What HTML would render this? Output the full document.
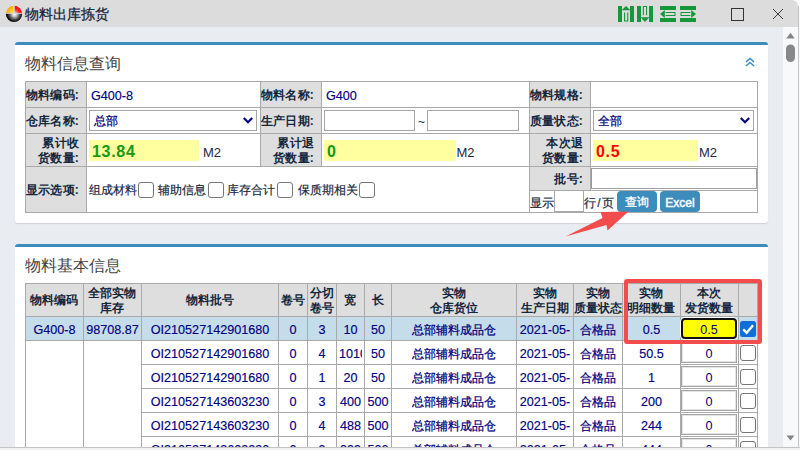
<!DOCTYPE html><html><head><meta charset="utf-8"><style>
html,body{margin:0;padding:0;width:800px;height:450px;overflow:hidden;background:#e9edf2;font-family:"Liberation Sans", sans-serif;}
div{box-sizing:border-box;}
</style></head><body>
<div style="position:absolute;left:0px;top:0px;width:800px;height:27px;background:#fafafa"></div>
<div style="position:absolute;left:0px;top:0px;width:798px;height:27px;background:#dcdcdc;border-top-right-radius:6px"></div>
<svg style="position:absolute;left:5px;top:5px" width="18" height="18" viewBox="0 0 18 18">
<defs>
<clipPath id="cc"><circle cx="9" cy="8.9" r="8.1"/></clipPath>
<radialGradient id="gb" cx="9.5" cy="9.3" r="8.5" gradientUnits="userSpaceOnUse"><stop offset="0" stop-color="#fff"/><stop offset="0.25" stop-color="#c8c8c8"/><stop offset="0.6" stop-color="#555"/><stop offset="0.9" stop-color="#000"/></radialGradient>
<radialGradient id="go" cx="8" cy="8" r="8" gradientUnits="userSpaceOnUse"><stop offset="0" stop-color="#ffe24a"/><stop offset="1" stop-color="#ff9a00"/></radialGradient>
<radialGradient id="gr" cx="10" cy="8" r="8" gradientUnits="userSpaceOnUse"><stop offset="0" stop-color="#ffc0c0"/><stop offset="0.5" stop-color="#ff2020"/><stop offset="1" stop-color="#ff0000"/></radialGradient>
</defs>
<g clip-path="url(#cc)">
<rect x="0" y="0" width="8" height="7.9" fill="url(#go)"/>
<rect x="9.7" y="0" width="9" height="7.9" fill="url(#gr)"/>
<rect x="0" y="8.8" width="18" height="10" fill="url(#gb)"/>
</g>
</svg>
<div style="position:absolute;left:25px;top:6px;white-space:nowrap;font-size:14px;line-height:17px;color:#12243a;font-weight:normal;line-height:16px;-webkit-text-stroke:0.25px #12243a">物料出库拣货</div>
<svg style="position:absolute;left:617px;top:5px" width="82" height="18" viewBox="617 5 82 18">
<g fill="#16973a">
<rect x="618" y="6" width="4" height="16"/><rect x="630" y="6" width="4" height="16"/>
<polygon points="626,6 621.6,10.3 630.4,10.3"/>
<path d="M624 12.6 h1.1 v7.8 h2.1 v-7.8 h1.1 v8.8 h-4.3 z"/>
<rect x="637" y="6" width="4" height="16"/><rect x="649" y="6" width="4" height="16"/>
<polygon points="645,22 640.6,17.2 649.4,17.2"/>
<path d="M642.8 15.2 v-9.2 h4.3 v9.2 h-1.1 v-8.2 h-2.1 v8.2 z"/>
<rect x="660" y="6" width="16" height="4"/><rect x="660" y="18" width="16" height="4"/>
<polygon points="660,14 664.8,10 664.8,18"/>
<path d="M665.5 12 h10 v4 h-10 v-1 h9 v-2 h-9 z"/>
<rect x="680" y="6" width="16" height="4"/><rect x="680" y="18" width="16" height="4"/>
<polygon points="696,14 691.2,10 691.2,18"/>
<path d="M690.5 12 h-10 v4 h10 v-1 h-9 v-2 h9 z"/>
</g></svg>
<div style="position:absolute;left:731px;top:8px;width:13px;height:13px;border:1.2px solid #333"></div>
<svg style="position:absolute;left:772px;top:8px" width="12" height="12" viewBox="0 0 12 12"><path d="M1 1 L11 11 M11 1 L1 11" stroke="#3a3a3a" stroke-width="1"/></svg>
<div style="position:absolute;left:798px;top:27px;width:2px;height:420px;background:#fafafa"></div>
<div style="position:absolute;left:798px;top:6px;width:1px;height:441px;background:#c4c4c4"></div>
<div style="position:absolute;left:783px;top:27px;width:15px;height:420px;background:#f8f9fa"></div>
<svg style="position:absolute;left:783px;top:27px" width="15" height="420" viewBox="0 0 15 420">
<polygon points="7.5,5.8 3.3,11.6 11.7,11.6" fill="#858585"/>
<rect x="3" y="17.5" width="9" height="17.5" rx="4.5" fill="#888"/>
<polygon points="7.5,413.6 3.5,408.4 11.5,408.4" fill="#858585"/>
</svg>
<div style="position:absolute;left:15px;top:42px;width:753px;height:181px;background:#fff;border-top:3px solid #3c8dbc;border-radius:3px;box-shadow:0 1px 1px rgba(0,0,0,0.12)"></div>
<div style="position:absolute;left:25px;top:54px;white-space:nowrap;font-size:16px;line-height:19px;color:#444;font-weight:normal;line-height:19px">物料信息查询</div>
<svg style="position:absolute;left:745px;top:57px" width="10" height="10" viewBox="0 0 10 10"><path d="M1 5 L5 1.5 L9 5 M1 9 L5 5.5 L9 9" stroke="#3c8dbc" stroke-width="1.6" fill="none"/></svg>
<div style="position:absolute;left:25px;top:81px;width:61px;height:26px;background:#dedede"></div>
<div style="position:absolute;left:25px;top:107px;width:61px;height:26px;background:#dedede"></div>
<div style="position:absolute;left:25px;top:133px;width:61px;height:33px;background:#dedede"></div>
<div style="position:absolute;left:260px;top:81px;width:61px;height:26px;background:#dedede"></div>
<div style="position:absolute;left:260px;top:107px;width:61px;height:26px;background:#dedede"></div>
<div style="position:absolute;left:260px;top:133px;width:61px;height:33px;background:#dedede"></div>
<div style="position:absolute;left:529px;top:81px;width:61px;height:26px;background:#dedede"></div>
<div style="position:absolute;left:529px;top:107px;width:61px;height:26px;background:#dedede"></div>
<div style="position:absolute;left:529px;top:133px;width:61px;height:33px;background:#dedede"></div>
<div style="position:absolute;left:25px;top:166px;width:61px;height:46px;background:#dedede"></div>
<div style="position:absolute;left:529px;top:166px;width:61px;height:24px;background:#dedede"></div>
<div style="position:absolute;left:25px;top:81px;width:733px;height:1px;background:#a9a9a9"></div>
<div style="position:absolute;left:25px;top:107px;width:733px;height:1px;background:#a9a9a9"></div>
<div style="position:absolute;left:25px;top:133px;width:733px;height:1px;background:#a9a9a9"></div>
<div style="position:absolute;left:25px;top:166px;width:733px;height:1px;background:#a9a9a9"></div>
<div style="position:absolute;left:25px;top:212px;width:733px;height:1px;background:#a9a9a9"></div>
<div style="position:absolute;left:529px;top:190px;width:229px;height:1px;background:#a9a9a9"></div>
<div style="position:absolute;left:25px;top:81px;width:1px;height:132px;background:#a9a9a9"></div>
<div style="position:absolute;left:86px;top:81px;width:1px;height:132px;background:#a9a9a9"></div>
<div style="position:absolute;left:260px;top:81px;width:1px;height:85px;background:#a9a9a9"></div>
<div style="position:absolute;left:321px;top:81px;width:1px;height:85px;background:#a9a9a9"></div>
<div style="position:absolute;left:529px;top:81px;width:1px;height:132px;background:#a9a9a9"></div>
<div style="position:absolute;left:590px;top:81px;width:1px;height:109px;background:#a9a9a9"></div>
<div style="position:absolute;left:757px;top:81px;width:1px;height:132px;background:#a9a9a9"></div>
<div style="position:absolute;left:-1px;top:88px;width:80px;text-align:right;white-space:nowrap;font-size:12px;line-height:15px;color:#13273d;font-weight:bold;letter-spacing:0.2px">物料编码:</div>
<div style="position:absolute;left:234px;top:88px;width:80px;text-align:right;white-space:nowrap;font-size:12px;line-height:15px;color:#13273d;font-weight:bold;letter-spacing:0.2px">物料名称:</div>
<div style="position:absolute;left:503px;top:88px;width:80px;text-align:right;white-space:nowrap;font-size:12px;line-height:15px;color:#13273d;font-weight:bold;letter-spacing:0.2px">物料规格:</div>
<div style="position:absolute;left:-1px;top:114px;width:80px;text-align:right;white-space:nowrap;font-size:12px;line-height:15px;color:#13273d;font-weight:bold;letter-spacing:0.2px">仓库名称:</div>
<div style="position:absolute;left:234px;top:114px;width:80px;text-align:right;white-space:nowrap;font-size:12px;line-height:15px;color:#13273d;font-weight:bold;letter-spacing:0.2px">生产日期:</div>
<div style="position:absolute;left:503px;top:114px;width:80px;text-align:right;white-space:nowrap;font-size:12px;line-height:15px;color:#13273d;font-weight:bold;letter-spacing:0.2px">质量状态:</div>
<div style="position:absolute;left:-1px;top:136px;width:80px;text-align:right;white-space:nowrap;font-size:12px;line-height:15px;color:#13273d;font-weight:bold;letter-spacing:0.2px">累计收<br>货数量:</div>
<div style="position:absolute;left:234px;top:136px;width:80px;text-align:right;white-space:nowrap;font-size:12px;line-height:15px;color:#13273d;font-weight:bold;letter-spacing:0.2px">累计退<br>货数量:</div>
<div style="position:absolute;left:503px;top:136px;width:80px;text-align:right;white-space:nowrap;font-size:12px;line-height:15px;color:#13273d;font-weight:bold;letter-spacing:0.2px">本次退<br>货数量:</div>
<div style="position:absolute;left:-1px;top:183px;width:80px;text-align:right;white-space:nowrap;font-size:12px;line-height:15px;color:#13273d;font-weight:bold;letter-spacing:0.2px">显示选项:</div>
<div style="position:absolute;left:503px;top:172px;width:80px;text-align:right;white-space:nowrap;font-size:12px;line-height:15px;color:#13273d;font-weight:bold;letter-spacing:0.2px">批号:</div>
<div style="position:absolute;left:91px;top:88px;white-space:nowrap;font-size:12.6px;line-height:15.6px;color:#00007e;font-weight:normal;line-height:17px;-webkit-text-stroke:0.15px #00007e">G400-8</div>
<div style="position:absolute;left:326px;top:88px;white-space:nowrap;font-size:12.6px;line-height:15.6px;color:#00007e;font-weight:normal;line-height:17px;-webkit-text-stroke:0.15px #00007e">G400</div>
<div style="position:absolute;left:89px;top:110px;width:168px;height:21px;border:1px solid #a6a6a6;background:#fff"></div>
<div style="position:absolute;left:94px;top:114px;white-space:nowrap;font-size:12px;line-height:15px;color:#00007e;font-weight:normal;-webkit-text-stroke:0.25px #00007e">总部</div>
<svg style="position:absolute;left:243px;top:117px" width="10" height="7" viewBox="0 0 10 7"><path d="M0.8 1 L5 5.3 L9.2 1" stroke="#08087e" stroke-width="2.2" fill="none"/></svg>
<div style="position:absolute;left:593px;top:110px;width:161px;height:21px;border:1px solid #a6a6a6;background:#fff"></div>
<div style="position:absolute;left:598px;top:114px;white-space:nowrap;font-size:12px;line-height:15px;color:#00007e;font-weight:normal;-webkit-text-stroke:0.25px #00007e">全部</div>
<svg style="position:absolute;left:740px;top:117px" width="10" height="7" viewBox="0 0 10 7"><path d="M0.8 1 L5 5.3 L9.2 1" stroke="#08087e" stroke-width="2.2" fill="none"/></svg>
<div style="position:absolute;left:324px;top:110px;width:91px;height:21px;border:1px solid #a6a6a6;background:#fff"></div>
<div style="position:absolute;left:418px;top:115px;white-space:nowrap;font-size:12px;line-height:15px;color:#1b2a3e;font-weight:normal;">~</div>
<div style="position:absolute;left:427px;top:110px;width:92px;height:21px;border:1px solid #a6a6a6;background:#fff"></div>
<div style="position:absolute;left:89px;top:140px;width:110px;height:21px;background:#ffff9f"></div>
<div style="position:absolute;left:92px;top:142px;white-space:nowrap;font-size:16px;line-height:19px;color:#149a14;font-weight:bold;line-height:19px;letter-spacing:0.7px">13.84</div>
<div style="position:absolute;left:203px;top:145px;white-space:nowrap;font-size:13px;line-height:16px;color:#1b2a3e;font-weight:normal;">M2</div>
<div style="position:absolute;left:324px;top:140px;width:132px;height:21px;background:#ffff9f"></div>
<div style="position:absolute;left:327px;top:142px;white-space:nowrap;font-size:16px;line-height:19px;color:#149a14;font-weight:bold;line-height:19px;letter-spacing:0.7px">0</div>
<div style="position:absolute;left:456.5px;top:145px;white-space:nowrap;font-size:13px;line-height:16px;color:#1b2a3e;font-weight:normal;">M2</div>
<div style="position:absolute;left:593px;top:140px;width:105px;height:21px;background:#ffff9f"></div>
<div style="position:absolute;left:596px;top:142px;white-space:nowrap;font-size:16px;line-height:19px;color:#ff0000;font-weight:bold;line-height:19px;letter-spacing:0.7px">0.5</div>
<div style="position:absolute;left:699px;top:145px;white-space:nowrap;font-size:13px;line-height:16px;color:#1b2a3e;font-weight:normal;">M2</div>
<div style="position:absolute;left:89px;top:183px;white-space:nowrap;font-size:12px;line-height:15px;color:#1b2a3e;font-weight:normal;-webkit-text-stroke:0.2px #1b2a3e">组成材料</div>
<div style="position:absolute;left:138px;top:182px;width:16px;height:16px;border:1px solid #767676;border-radius:3px;background:#fff"></div>
<div style="position:absolute;left:158px;top:183px;white-space:nowrap;font-size:12px;line-height:15px;color:#1b2a3e;font-weight:normal;-webkit-text-stroke:0.2px #1b2a3e">辅助信息</div>
<div style="position:absolute;left:208px;top:182px;width:16px;height:16px;border:1px solid #767676;border-radius:3px;background:#fff"></div>
<div style="position:absolute;left:227px;top:183px;white-space:nowrap;font-size:12px;line-height:15px;color:#1b2a3e;font-weight:normal;-webkit-text-stroke:0.2px #1b2a3e">库存合计</div>
<div style="position:absolute;left:277px;top:182px;width:16px;height:16px;border:1px solid #767676;border-radius:3px;background:#fff"></div>
<div style="position:absolute;left:298px;top:183px;white-space:nowrap;font-size:12px;line-height:15px;color:#1b2a3e;font-weight:normal;-webkit-text-stroke:0.2px #1b2a3e">保质期相关</div>
<div style="position:absolute;left:359px;top:182px;width:16px;height:16px;border:1px solid #767676;border-radius:3px;background:#fff"></div>
<div style="position:absolute;left:591px;top:168px;width:166px;height:21px;border:1px solid #a0a0a0;border-left:1.5px solid #9a9a9a;background:#fff"></div>
<div style="position:absolute;left:530px;top:196px;white-space:nowrap;font-size:12px;line-height:15px;color:#1b2a3e;font-weight:normal;-webkit-text-stroke:0.2px #1b2a3e">显示</div>
<div style="position:absolute;left:554px;top:190px;width:30px;height:22px;border:1px solid #a8a8a8;background:#fff"></div>
<div style="position:absolute;left:584px;top:196px;white-space:nowrap;font-size:12px;line-height:15px;color:#1b2a3e;font-weight:normal;-webkit-text-stroke:0.2px #1b2a3e">行<span style="display:inline-block;width:6px;text-align:center">/</span>页</div>
<div style="position:absolute;left:617px;top:191px;width:40px;height:21px;background:#3c8dbc;border-radius:4px;color:#fff;font-size:12px;line-height:23px;text-align:center;-webkit-text-stroke:0.3px #fff;">查询</div>
<div style="position:absolute;left:660px;top:191px;width:40px;height:21px;background:#3c8dbc;border-radius:4px;color:#fff;font-size:12px;line-height:23px;text-align:center;-webkit-text-stroke:0.3px #fff;font-size:12px;line-height:24px;-webkit-text-stroke:0.45px #fff">Excel</div>
<svg style="position:absolute;left:560px;top:205px" width="75" height="40" viewBox="560 205 75 40">
<polygon points="565.5,236.5 602.5,218 600.5,212 628.5,211.5 607.5,230.6 606.5,225" fill="#f24c4c"/>
</svg>
<div style="position:absolute;left:15px;top:244px;width:753px;height:230px;background:#fff;border-top:3px solid #3c8dbc;border-radius:3px"></div>
<div style="position:absolute;left:25px;top:256px;white-space:nowrap;font-size:16px;line-height:19px;color:#444;font-weight:normal;line-height:19px">物料基本信息</div>
<div style="position:absolute;left:25px;top:283px;width:732px;height:33px;background:#dedede"></div>
<div style="position:absolute;left:25px;top:316px;width:732px;height:24px;background:#c5dcea"></div>
<div style="position:absolute;left:25px;top:283px;width:733px;height:1px;background:#a9a9a9"></div>
<div style="position:absolute;left:25px;top:316px;width:733px;height:1px;background:#a9a9a9"></div>
<div style="position:absolute;left:25px;top:340px;width:733px;height:1px;background:#a9a9a9"></div>
<div style="position:absolute;left:141px;top:364px;width:617px;height:1px;background:#a9a9a9"></div>
<div style="position:absolute;left:141px;top:388px;width:617px;height:1px;background:#a9a9a9"></div>
<div style="position:absolute;left:141px;top:412px;width:617px;height:1px;background:#a9a9a9"></div>
<div style="position:absolute;left:141px;top:436px;width:617px;height:1px;background:#a9a9a9"></div>
<div style="position:absolute;left:141px;top:460px;width:617px;height:1px;background:#a9a9a9"></div>
<div style="position:absolute;left:25px;top:283px;width:1px;height:167px;background:#a9a9a9"></div>
<div style="position:absolute;left:83px;top:283px;width:1px;height:167px;background:#a9a9a9"></div>
<div style="position:absolute;left:141px;top:283px;width:1px;height:167px;background:#a9a9a9"></div>
<div style="position:absolute;left:278px;top:283px;width:1px;height:167px;background:#a9a9a9"></div>
<div style="position:absolute;left:307px;top:283px;width:1px;height:167px;background:#a9a9a9"></div>
<div style="position:absolute;left:336px;top:283px;width:1px;height:167px;background:#a9a9a9"></div>
<div style="position:absolute;left:364px;top:283px;width:1px;height:167px;background:#a9a9a9"></div>
<div style="position:absolute;left:391px;top:283px;width:1px;height:167px;background:#a9a9a9"></div>
<div style="position:absolute;left:516px;top:283px;width:1px;height:167px;background:#a9a9a9"></div>
<div style="position:absolute;left:573px;top:283px;width:1px;height:167px;background:#a9a9a9"></div>
<div style="position:absolute;left:622px;top:283px;width:1px;height:167px;background:#a9a9a9"></div>
<div style="position:absolute;left:680px;top:283px;width:1px;height:167px;background:#a9a9a9"></div>
<div style="position:absolute;left:738px;top:283px;width:1px;height:167px;background:#a9a9a9"></div>
<div style="position:absolute;left:757px;top:283px;width:1px;height:167px;background:#a9a9a9"></div>
<div style="position:absolute;left:25px;top:293px;width:58px;text-align:center;white-space:nowrap;font-size:12px;line-height:15px;color:#13273d;font-weight:bold;">物料编码</div>
<div style="position:absolute;left:83px;top:286px;width:58px;text-align:center;white-space:nowrap;font-size:12px;line-height:15px;color:#13273d;font-weight:bold;">全部实物<br>库存</div>
<div style="position:absolute;left:141px;top:293px;width:137px;text-align:center;white-space:nowrap;font-size:12px;line-height:15px;color:#13273d;font-weight:bold;">物料批号</div>
<div style="position:absolute;left:278px;top:293px;width:29px;text-align:center;white-space:nowrap;font-size:12px;line-height:15px;color:#13273d;font-weight:bold;">卷号</div>
<div style="position:absolute;left:307px;top:286px;width:29px;text-align:center;white-space:nowrap;font-size:12px;line-height:15px;color:#13273d;font-weight:bold;">分切<br>卷号</div>
<div style="position:absolute;left:336px;top:293px;width:28px;text-align:center;white-space:nowrap;font-size:12px;line-height:15px;color:#13273d;font-weight:bold;">宽</div>
<div style="position:absolute;left:364px;top:293px;width:27px;text-align:center;white-space:nowrap;font-size:12px;line-height:15px;color:#13273d;font-weight:bold;">长</div>
<div style="position:absolute;left:391px;top:286px;width:125px;text-align:center;white-space:nowrap;font-size:12px;line-height:15px;color:#13273d;font-weight:bold;">实物<br>仓库货位</div>
<div style="position:absolute;left:516px;top:286px;width:57px;text-align:center;white-space:nowrap;font-size:12px;line-height:15px;color:#13273d;font-weight:bold;">实物<br>生产日期</div>
<div style="position:absolute;left:573px;top:286px;width:49px;text-align:center;white-space:nowrap;font-size:12px;line-height:15px;color:#13273d;font-weight:bold;">实物<br>质量状态</div>
<div style="position:absolute;left:622px;top:286px;width:58px;text-align:center;white-space:nowrap;font-size:12px;line-height:15px;color:#13273d;font-weight:bold;">实物<br>明细数量</div>
<div style="position:absolute;left:680px;top:286px;width:58px;text-align:center;white-space:nowrap;font-size:12px;line-height:15px;color:#13273d;font-weight:bold;">本次<br>发货数量</div>
<div style="position:absolute;left:738px;top:293px;width:19px;text-align:center;white-space:nowrap;font-size:12px;line-height:15px;color:#13273d;font-weight:bold;"></div>
<div style="position:absolute;left:28px;top:322px;width:53px;height:17px;overflow:hidden;text-align:center;white-space:nowrap;font-size:12.6px;-webkit-text-stroke:0.15px #00007e;line-height:17px;color:#00007e">G400-8</div>
<div style="position:absolute;left:86px;top:322px;width:53px;height:17px;overflow:hidden;text-align:center;white-space:nowrap;font-size:12.6px;-webkit-text-stroke:0.15px #00007e;line-height:17px;color:#00007e">98708.87</div>
<div style="position:absolute;left:144px;top:322px;width:132px;height:17px;overflow:hidden;text-align:center;white-space:nowrap;font-size:12.6px;-webkit-text-stroke:0.15px #00007e;line-height:17px;color:#00007e">OI210527142901680</div>
<div style="position:absolute;left:281px;top:322px;width:24px;height:17px;overflow:hidden;text-align:center;white-space:nowrap;font-size:12.6px;-webkit-text-stroke:0.15px #00007e;line-height:17px;color:#00007e">0</div>
<div style="position:absolute;left:310px;top:322px;width:24px;height:17px;overflow:hidden;text-align:center;white-space:nowrap;font-size:12.6px;-webkit-text-stroke:0.15px #00007e;line-height:17px;color:#00007e">3</div>
<div style="position:absolute;left:339px;top:322px;width:23px;height:17px;overflow:hidden;text-align:center;white-space:nowrap;font-size:12.6px;-webkit-text-stroke:0.15px #00007e;line-height:17px;color:#00007e">10</div>
<div style="position:absolute;left:367px;top:322px;width:22px;height:17px;overflow:hidden;text-align:center;white-space:nowrap;font-size:12.6px;-webkit-text-stroke:0.15px #00007e;line-height:17px;color:#00007e">50</div>
<div style="position:absolute;left:394px;top:322px;width:120px;height:17px;overflow:hidden;text-align:center;white-space:nowrap;font-size:12px;-webkit-text-stroke:0.25px #00007e;line-height:17px;color:#00007e">总部辅料成品仓</div>
<div style="position:absolute;left:519px;top:322px;width:52px;height:17px;overflow:hidden;text-align:center;white-space:nowrap;font-size:12.6px;-webkit-text-stroke:0.15px #00007e;line-height:17px;color:#00007e">2021-05-</div>
<div style="position:absolute;left:576px;top:322px;width:44px;height:17px;overflow:hidden;text-align:center;white-space:nowrap;font-size:12px;-webkit-text-stroke:0.25px #00007e;line-height:17px;color:#00007e">合格品</div>
<div style="position:absolute;left:625px;top:322px;width:53px;height:17px;overflow:hidden;text-align:center;white-space:nowrap;font-size:12.6px;-webkit-text-stroke:0.15px #00007e;line-height:17px;color:#00007e">0.5</div>
<div style="position:absolute;left:680px;top:317px;width:58px;height:23px;background:#fff;border-radius:5px"></div>
<div style="position:absolute;left:681px;top:318px;width:56px;height:21px;background:#ffff00;border:2px solid #111;border-radius:4px"></div>
<div style="position:absolute;left:681px;top:322px;width:56px;text-align:center;white-space:nowrap;font-size:12.6px;line-height:17px;color:#00007e;font-weight:normal;">0.5</div>
<svg style="position:absolute;left:740px;top:321px" width="16" height="16" viewBox="0 0 16 16"><rect x="0" y="0" width="16" height="16" rx="2.5" fill="#0f6fd8"/><path d="M3.2 8.4 L6.7 11.7 L13 4.3" stroke="#fff" stroke-width="2.4" fill="none"/></svg>
<div style="position:absolute;left:144px;top:346px;width:132px;height:17px;overflow:hidden;text-align:center;white-space:nowrap;font-size:12.6px;-webkit-text-stroke:0.15px #00007e;line-height:17px;color:#00007e">OI210527142901680</div>
<div style="position:absolute;left:281px;top:346px;width:24px;height:17px;overflow:hidden;text-align:center;white-space:nowrap;font-size:12.6px;-webkit-text-stroke:0.15px #00007e;line-height:17px;color:#00007e">0</div>
<div style="position:absolute;left:310px;top:346px;width:24px;height:17px;overflow:hidden;text-align:center;white-space:nowrap;font-size:12.6px;-webkit-text-stroke:0.15px #00007e;line-height:17px;color:#00007e">4</div>
<div style="position:absolute;left:339px;top:346px;width:23px;height:17px;overflow:hidden;text-align:center;white-space:nowrap;font-size:12.6px;-webkit-text-stroke:0.15px #00007e;line-height:17px;color:#00007e">1010</div>
<div style="position:absolute;left:367px;top:346px;width:22px;height:17px;overflow:hidden;text-align:center;white-space:nowrap;font-size:12.6px;-webkit-text-stroke:0.15px #00007e;line-height:17px;color:#00007e">50</div>
<div style="position:absolute;left:394px;top:346px;width:120px;height:17px;overflow:hidden;text-align:center;white-space:nowrap;font-size:12px;-webkit-text-stroke:0.25px #00007e;line-height:17px;color:#00007e">总部辅料成品仓</div>
<div style="position:absolute;left:519px;top:346px;width:52px;height:17px;overflow:hidden;text-align:center;white-space:nowrap;font-size:12.6px;-webkit-text-stroke:0.15px #00007e;line-height:17px;color:#00007e">2021-05-</div>
<div style="position:absolute;left:576px;top:346px;width:44px;height:17px;overflow:hidden;text-align:center;white-space:nowrap;font-size:12px;-webkit-text-stroke:0.25px #00007e;line-height:17px;color:#00007e">合格品</div>
<div style="position:absolute;left:625px;top:346px;width:53px;height:17px;overflow:hidden;text-align:center;white-space:nowrap;font-size:12.6px;-webkit-text-stroke:0.15px #00007e;line-height:17px;color:#00007e">50.5</div>
<div style="position:absolute;left:681px;top:342px;width:56px;height:21px;border:1px solid #a4a4a4;box-shadow:inset 0 0 0 1px #e4e4e4;background:#fff"></div>
<div style="position:absolute;left:681px;top:346px;width:56px;text-align:center;white-space:nowrap;font-size:12.6px;line-height:17px;color:#00007e;font-weight:normal;">0</div>
<div style="position:absolute;left:740px;top:345px;width:16px;height:16px;border:1px solid #767676;border-radius:3px;background:#fff"></div>
<div style="position:absolute;left:144px;top:370px;width:132px;height:17px;overflow:hidden;text-align:center;white-space:nowrap;font-size:12.6px;-webkit-text-stroke:0.15px #00007e;line-height:17px;color:#00007e">OI210527142901680</div>
<div style="position:absolute;left:281px;top:370px;width:24px;height:17px;overflow:hidden;text-align:center;white-space:nowrap;font-size:12.6px;-webkit-text-stroke:0.15px #00007e;line-height:17px;color:#00007e">0</div>
<div style="position:absolute;left:310px;top:370px;width:24px;height:17px;overflow:hidden;text-align:center;white-space:nowrap;font-size:12.6px;-webkit-text-stroke:0.15px #00007e;line-height:17px;color:#00007e">1</div>
<div style="position:absolute;left:339px;top:370px;width:23px;height:17px;overflow:hidden;text-align:center;white-space:nowrap;font-size:12.6px;-webkit-text-stroke:0.15px #00007e;line-height:17px;color:#00007e">20</div>
<div style="position:absolute;left:367px;top:370px;width:22px;height:17px;overflow:hidden;text-align:center;white-space:nowrap;font-size:12.6px;-webkit-text-stroke:0.15px #00007e;line-height:17px;color:#00007e">50</div>
<div style="position:absolute;left:394px;top:370px;width:120px;height:17px;overflow:hidden;text-align:center;white-space:nowrap;font-size:12px;-webkit-text-stroke:0.25px #00007e;line-height:17px;color:#00007e">总部辅料成品仓</div>
<div style="position:absolute;left:519px;top:370px;width:52px;height:17px;overflow:hidden;text-align:center;white-space:nowrap;font-size:12.6px;-webkit-text-stroke:0.15px #00007e;line-height:17px;color:#00007e">2021-05-</div>
<div style="position:absolute;left:576px;top:370px;width:44px;height:17px;overflow:hidden;text-align:center;white-space:nowrap;font-size:12px;-webkit-text-stroke:0.25px #00007e;line-height:17px;color:#00007e">合格品</div>
<div style="position:absolute;left:625px;top:370px;width:53px;height:17px;overflow:hidden;text-align:center;white-space:nowrap;font-size:12.6px;-webkit-text-stroke:0.15px #00007e;line-height:17px;color:#00007e">1</div>
<div style="position:absolute;left:681px;top:366px;width:56px;height:21px;border:1px solid #a4a4a4;box-shadow:inset 0 0 0 1px #e4e4e4;background:#fff"></div>
<div style="position:absolute;left:681px;top:370px;width:56px;text-align:center;white-space:nowrap;font-size:12.6px;line-height:17px;color:#00007e;font-weight:normal;">0</div>
<div style="position:absolute;left:740px;top:369px;width:16px;height:16px;border:1px solid #767676;border-radius:3px;background:#fff"></div>
<div style="position:absolute;left:144px;top:394px;width:132px;height:17px;overflow:hidden;text-align:center;white-space:nowrap;font-size:12.6px;-webkit-text-stroke:0.15px #00007e;line-height:17px;color:#00007e">OI210527143603230</div>
<div style="position:absolute;left:281px;top:394px;width:24px;height:17px;overflow:hidden;text-align:center;white-space:nowrap;font-size:12.6px;-webkit-text-stroke:0.15px #00007e;line-height:17px;color:#00007e">0</div>
<div style="position:absolute;left:310px;top:394px;width:24px;height:17px;overflow:hidden;text-align:center;white-space:nowrap;font-size:12.6px;-webkit-text-stroke:0.15px #00007e;line-height:17px;color:#00007e">3</div>
<div style="position:absolute;left:339px;top:394px;width:23px;height:17px;overflow:hidden;text-align:center;white-space:nowrap;font-size:12.6px;-webkit-text-stroke:0.15px #00007e;line-height:17px;color:#00007e">400</div>
<div style="position:absolute;left:367px;top:394px;width:22px;height:17px;overflow:hidden;text-align:center;white-space:nowrap;font-size:12.6px;-webkit-text-stroke:0.15px #00007e;line-height:17px;color:#00007e">500</div>
<div style="position:absolute;left:394px;top:394px;width:120px;height:17px;overflow:hidden;text-align:center;white-space:nowrap;font-size:12px;-webkit-text-stroke:0.25px #00007e;line-height:17px;color:#00007e">总部辅料成品仓</div>
<div style="position:absolute;left:519px;top:394px;width:52px;height:17px;overflow:hidden;text-align:center;white-space:nowrap;font-size:12.6px;-webkit-text-stroke:0.15px #00007e;line-height:17px;color:#00007e">2021-05-</div>
<div style="position:absolute;left:576px;top:394px;width:44px;height:17px;overflow:hidden;text-align:center;white-space:nowrap;font-size:12px;-webkit-text-stroke:0.25px #00007e;line-height:17px;color:#00007e">合格品</div>
<div style="position:absolute;left:625px;top:394px;width:53px;height:17px;overflow:hidden;text-align:center;white-space:nowrap;font-size:12.6px;-webkit-text-stroke:0.15px #00007e;line-height:17px;color:#00007e">200</div>
<div style="position:absolute;left:681px;top:390px;width:56px;height:21px;border:1px solid #a4a4a4;box-shadow:inset 0 0 0 1px #e4e4e4;background:#fff"></div>
<div style="position:absolute;left:681px;top:394px;width:56px;text-align:center;white-space:nowrap;font-size:12.6px;line-height:17px;color:#00007e;font-weight:normal;">0</div>
<div style="position:absolute;left:740px;top:393px;width:16px;height:16px;border:1px solid #767676;border-radius:3px;background:#fff"></div>
<div style="position:absolute;left:144px;top:418px;width:132px;height:17px;overflow:hidden;text-align:center;white-space:nowrap;font-size:12.6px;-webkit-text-stroke:0.15px #00007e;line-height:17px;color:#00007e">OI210527143603230</div>
<div style="position:absolute;left:281px;top:418px;width:24px;height:17px;overflow:hidden;text-align:center;white-space:nowrap;font-size:12.6px;-webkit-text-stroke:0.15px #00007e;line-height:17px;color:#00007e">0</div>
<div style="position:absolute;left:310px;top:418px;width:24px;height:17px;overflow:hidden;text-align:center;white-space:nowrap;font-size:12.6px;-webkit-text-stroke:0.15px #00007e;line-height:17px;color:#00007e">4</div>
<div style="position:absolute;left:339px;top:418px;width:23px;height:17px;overflow:hidden;text-align:center;white-space:nowrap;font-size:12.6px;-webkit-text-stroke:0.15px #00007e;line-height:17px;color:#00007e">488</div>
<div style="position:absolute;left:367px;top:418px;width:22px;height:17px;overflow:hidden;text-align:center;white-space:nowrap;font-size:12.6px;-webkit-text-stroke:0.15px #00007e;line-height:17px;color:#00007e">500</div>
<div style="position:absolute;left:394px;top:418px;width:120px;height:17px;overflow:hidden;text-align:center;white-space:nowrap;font-size:12px;-webkit-text-stroke:0.25px #00007e;line-height:17px;color:#00007e">总部辅料成品仓</div>
<div style="position:absolute;left:519px;top:418px;width:52px;height:17px;overflow:hidden;text-align:center;white-space:nowrap;font-size:12.6px;-webkit-text-stroke:0.15px #00007e;line-height:17px;color:#00007e">2021-05-</div>
<div style="position:absolute;left:576px;top:418px;width:44px;height:17px;overflow:hidden;text-align:center;white-space:nowrap;font-size:12px;-webkit-text-stroke:0.25px #00007e;line-height:17px;color:#00007e">合格品</div>
<div style="position:absolute;left:625px;top:418px;width:53px;height:17px;overflow:hidden;text-align:center;white-space:nowrap;font-size:12.6px;-webkit-text-stroke:0.15px #00007e;line-height:17px;color:#00007e">244</div>
<div style="position:absolute;left:681px;top:414px;width:56px;height:21px;border:1px solid #a4a4a4;box-shadow:inset 0 0 0 1px #e4e4e4;background:#fff"></div>
<div style="position:absolute;left:681px;top:418px;width:56px;text-align:center;white-space:nowrap;font-size:12.6px;line-height:17px;color:#00007e;font-weight:normal;">0</div>
<div style="position:absolute;left:740px;top:417px;width:16px;height:16px;border:1px solid #767676;border-radius:3px;background:#fff"></div>
<div style="position:absolute;left:144px;top:442px;width:132px;height:17px;overflow:hidden;text-align:center;white-space:nowrap;font-size:12.6px;-webkit-text-stroke:0.15px #00007e;line-height:17px;color:#00007e">OI210527143603230</div>
<div style="position:absolute;left:281px;top:442px;width:24px;height:17px;overflow:hidden;text-align:center;white-space:nowrap;font-size:12.6px;-webkit-text-stroke:0.15px #00007e;line-height:17px;color:#00007e">0</div>
<div style="position:absolute;left:310px;top:442px;width:24px;height:17px;overflow:hidden;text-align:center;white-space:nowrap;font-size:12.6px;-webkit-text-stroke:0.15px #00007e;line-height:17px;color:#00007e">9</div>
<div style="position:absolute;left:339px;top:442px;width:23px;height:17px;overflow:hidden;text-align:center;white-space:nowrap;font-size:12.6px;-webkit-text-stroke:0.15px #00007e;line-height:17px;color:#00007e">999</div>
<div style="position:absolute;left:367px;top:442px;width:22px;height:17px;overflow:hidden;text-align:center;white-space:nowrap;font-size:12.6px;-webkit-text-stroke:0.15px #00007e;line-height:17px;color:#00007e">500</div>
<div style="position:absolute;left:394px;top:442px;width:120px;height:17px;overflow:hidden;text-align:center;white-space:nowrap;font-size:12px;-webkit-text-stroke:0.25px #00007e;line-height:17px;color:#00007e">总部辅料成品仓</div>
<div style="position:absolute;left:519px;top:442px;width:52px;height:17px;overflow:hidden;text-align:center;white-space:nowrap;font-size:12.6px;-webkit-text-stroke:0.15px #00007e;line-height:17px;color:#00007e">2021-05-</div>
<div style="position:absolute;left:576px;top:442px;width:44px;height:17px;overflow:hidden;text-align:center;white-space:nowrap;font-size:12px;-webkit-text-stroke:0.25px #00007e;line-height:17px;color:#00007e">合格品</div>
<div style="position:absolute;left:625px;top:442px;width:53px;height:17px;overflow:hidden;text-align:center;white-space:nowrap;font-size:12.6px;-webkit-text-stroke:0.15px #00007e;line-height:17px;color:#00007e">444</div>
<div style="position:absolute;left:681px;top:438px;width:56px;height:21px;border:1px solid #a4a4a4;box-shadow:inset 0 0 0 1px #e4e4e4;background:#fff"></div>
<div style="position:absolute;left:681px;top:442px;width:56px;text-align:center;white-space:nowrap;font-size:12.6px;line-height:17px;color:#00007e;font-weight:normal;">0</div>
<div style="position:absolute;left:740px;top:441px;width:16px;height:16px;border:1px solid #767676;border-radius:3px;background:#fff"></div>
<div style="position:absolute;left:624px;top:279px;width:138px;height:65px;border:4px solid #f24c4c;border-radius:3px"></div>
<div style="position:absolute;left:0px;top:447px;width:800px;height:3px;background:#f2f2f2;border-top:1px solid #c4c4c4"></div>
</body></html>
